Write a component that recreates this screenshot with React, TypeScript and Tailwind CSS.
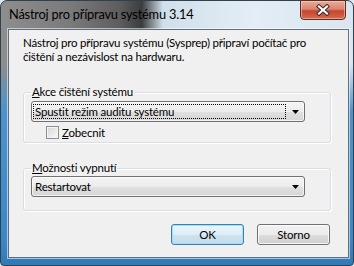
import React from 'react';

const bodyFont = "font-['Lato','Noto_Sans',sans-serif]";

const Combo: React.FC<{ text: string; focused?: boolean }> = ({ text, focused }) => {
  return (
    <div className="flex h-[21px] w-[274px] items-center rounded-[3px] border border-[#707070] bg-[linear-gradient(180deg,#f4f4f4_0%,#ececec_50%,#e0e0e0_51%,#d6d6d6_100%)] pl-[1px] shadow-[inset_0_0_0_1px_rgba(255,255,255,0.7)]">
      <div
        className={
          focused
            ? 'flex h-[15px] flex-1 items-center border border-dotted border-black pl-[1px]'
            : 'flex h-[15px] flex-1 items-center border border-transparent pl-[1px]'
        }
      >
        <span className="leading-[14px]">{text}</span>
      </div>
      <div className="flex w-[18px] items-center justify-center">
        <svg width="7" height="4" viewBox="0 0 7 4">
          <path d="M0 0h7L3.5 4z" fill="#000" />
        </svg>
      </div>
    </div>
  );
};

const GroupBox: React.FC<{ label: React.ReactNode; children: React.ReactNode; className?: string }> = ({
  label,
  children,
  className,
}) => {
  return (
    <fieldset
      className={`ml-[14px] w-[308px] rounded-[3px] border border-[#d5dfe5] shadow-[inset_1px_1px_0_#fff,1px_1px_0_#fff] pl-[7px] ${className ?? ''}`}
    >
      <legend className="px-[1px] leading-[14px]">{label}</legend>
      {children}
    </fieldset>
  );
};

const Button: React.FC<{ label: string; isDefault?: boolean }> = ({ label, isDefault }) => {
  return (
    <button
      className={
        isDefault
          ? 'h-[21px] w-[73px] rounded-[3px] border border-[#3c7fb1] bg-[linear-gradient(180deg,#eaf5fb_0%,#deedf6_50%,#cfe3ef_51%,#c4dceb_100%)] leading-[14px] shadow-[inset_0_0_0_1px_#9ee0f9]'
          : 'h-[21px] w-[73px] rounded-[3px] border border-[#707070] bg-[linear-gradient(180deg,#f2f2f2_0%,#ebebeb_50%,#dddddd_51%,#cfcfcf_100%)] leading-[14px] shadow-[inset_0_0_0_1px_rgba(255,255,255,0.8)]'
      }
    >
      {label}
    </button>
  );
};

export default function App() {
  return (
    <div className={`h-[266px] w-[354px] overflow-hidden bg-[#dfe8f0] ${bodyFont}`}>
      {/* Window frame */}
      <div className="flex h-[266px] w-[354px] flex-col rounded-t-[7px] rounded-b-[4px] border border-[#31404d] bg-[linear-gradient(180deg,rgba(0,0,0,0)_0%,rgba(0,0,0,0)_24%,#4a93ce_42%,#3c88c6_90%,#2f79b9_100%),linear-gradient(90deg,#8e8e8e_0%,#7a7a7a_20%,#5c5c5c_34%,#3c3c3c_40%,#d0dfeb_46%,#e4edf5_72%,#dae5ef_100%)] pr-[4px] pb-[7px] pl-[7px]">
        {/* Title bar */}
        <div className="flex h-[28px] items-start justify-between">
          <span className="mt-[5px] ml-[1px] text-[12.8px] leading-[16px] tracking-[-0.2px] text-black">
            Nástroj pro přípravu systému 3.14
          </span>
          <div className="mr-[3px] -mt-[1px] flex h-[20px] w-[46px] items-center justify-center rounded-b-[4px] border border-[#5b2c22] bg-[linear-gradient(180deg,#e8aa9b_0%,#d98670_45%,#c8452e_55%,#d36a50_100%)] shadow-[inset_0_0_0_1px_rgba(255,220,210,0.5)]">
            <svg width="14" height="12" viewBox="0 0 14 12">
              <path d="M3 2.5L11 9.5M11 2.5L3 9.5" stroke="#3b2c2a" strokeWidth="4.2" strokeLinecap="square" />
              <path d="M3 2.5L11 9.5M11 2.5L3 9.5" stroke="#ffffff" strokeWidth="2.2" strokeLinecap="square" />
            </svg>
          </div>
        </div>

        {/* Client area */}
        <div className="flex flex-1 flex-col border border-[#5f6f7d] bg-[#f0f0f0] text-[11.5px] tracking-[-0.2px] text-black shadow-[0_0_0_1px_rgba(255,255,255,0.55)]">
          <p className="mt-[6px] ml-[14px] leading-[14px] whitespace-nowrap">
            Nástroj pro přípravu systému (Sysprep) připraví počítač pro
            <br />
            čištění a nezávislost na hardwaru.
          </p>

          <GroupBox
            className="mt-[21px] pb-[3px]"
            label={
              <>
                <span className="underline">A</span>kce čištění systému
              </>
            }
          >
            <div className="mt-[2px]">
              <Combo text="Spustit režim auditu systému" focused />
            </div>
            <div className="mt-[4px] ml-[15px] flex h-[13px] items-center gap-[3px]">
              <div className="h-[13px] w-[13px] border border-[#8e8f8f] bg-[linear-gradient(135deg,#d4d4d4_0%,#e8e8e8_50%,#fafafa_100%)] shadow-[inset_0_0_0_1px_#f4f4f4]" />
              <span className="leading-[13px]">
                <span className="underline">Z</span>obecnit
              </span>
            </div>
          </GroupBox>

          <GroupBox
            className="mt-[18px] pb-[13px]"
            label={
              <>
                <span className="underline">M</span>ožnosti vypnutí
              </>
            }
          >
            <div className="mt-[1px]">
              <Combo text="Restartovat" />
            </div>
          </GroupBox>

          <div className="mt-[13px] mr-[18px] flex justify-end gap-[13px]">
            <Button label="OK" isDefault />
            <Button label="Storno" />
          </div>
        </div>
      </div>
    </div>
  );
}
